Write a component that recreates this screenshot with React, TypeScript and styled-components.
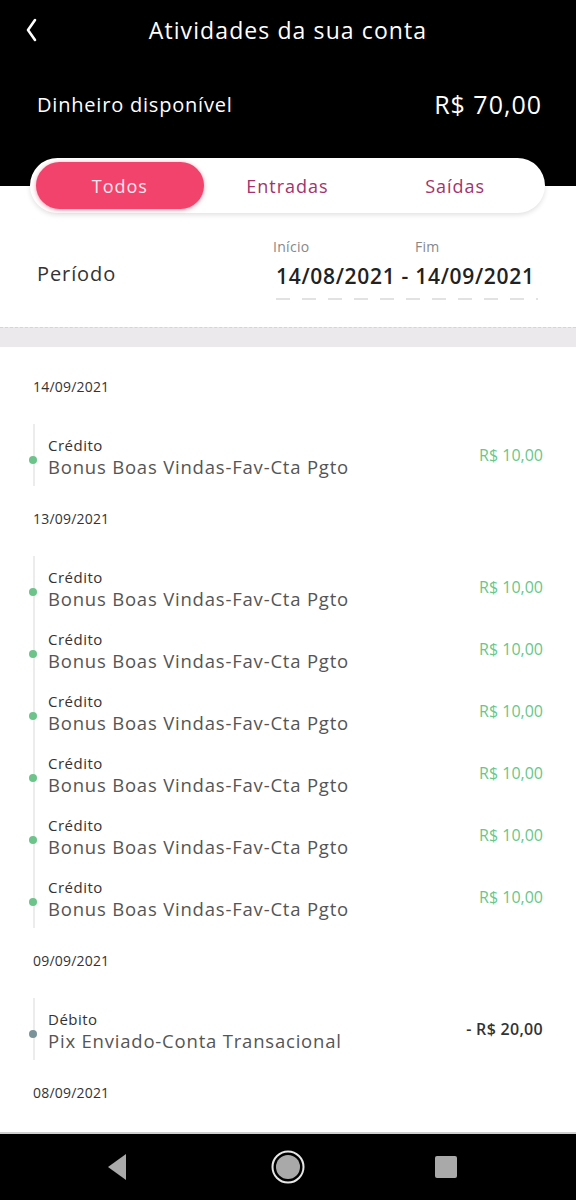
import styled, { createGlobalStyle } from "styled-components";

type Entry = { kind: "Crédito" | "Débito"; desc: string; amount: string };
type Group = { date: string; entries: Entry[] };

const bonus: Entry = { kind: "Crédito", desc: "Bonus Boas Vindas-Fav-Cta Pgto", amount: "R$ 10,00" };

const groups: Group[] = [
  { date: "14/09/2021", entries: [bonus] },
  { date: "13/09/2021", entries: [bonus, bonus, bonus, bonus, bonus, bonus] },
  { date: "09/09/2021", entries: [{ kind: "Débito", desc: "Pix Enviado-Conta Transacional", amount: "- R$ 20,00" }] },
  { date: "08/09/2021", entries: [] },
];

const tabs = ["Todos", "Entradas", "Saídas"];

const App = () => {
  return <Screen>
    <GlobalStyle />
    <Header>
      <TopBar>
        <BackButton aria-label="Voltar">
          <svg width="14" height="24" viewBox="0 0 14 24">
            <polyline points="11,2 4,12 11,22" fill="none" stroke="#fff" strokeWidth="2.6" strokeLinecap="round" strokeLinejoin="round" />
          </svg>
        </BackButton>
        <Title>Atividades da sua conta</Title>
      </TopBar>
      <BalanceRow>
        <BalanceLabel>Dinheiro disponível</BalanceLabel>
        <BalanceValue>R$ 70,00</BalanceValue>
      </BalanceRow>
    </Header>
    <TabsWrap>
      <Tabs>
        {tabs.map((t, i) => <Tab key={t} $active={i === 0}>{t}</Tab>)}
      </Tabs>
    </TabsWrap>
    <PeriodRow>
      <PeriodLabel>Período</PeriodLabel>
      <RangeBox>
        <RangeLabels>
          <RangeLabel>Início</RangeLabel>
          <RangeLabel>Fim</RangeLabel>
        </RangeLabels>
        <RangeValue>14/08/2021 - 14/09/2021</RangeValue>
      </RangeBox>
    </PeriodRow>
    <Divider />
    <List>
      {groups.map((g) => <div key={g.date}>
        <DateLabel>{g.date}</DateLabel>
        {g.entries.map((e, i) => <Item key={i}>
          <ItemText $credit={e.kind === "Crédito"}>
            <Kind>{e.kind}</Kind>
            <Desc>{e.desc}</Desc>
          </ItemText>
          <Amount $credit={e.kind === "Crédito"}>{e.amount}</Amount>
        </Item>)}
      </div>)}
    </List>
    <NavBar>
      <NavIcon $offset={0}>
        <svg width="20" height="28" viewBox="0 0 20 28">
          <polygon points="19,1 19,27 1,14" fill="#a9a9a9" />
        </svg>
      </NavIcon>
      <NavIcon $offset={14}>
        <svg width="36" height="36" viewBox="0 0 36 36">
          <circle cx="18" cy="18" r="15.5" fill="none" stroke="#e6e6e6" strokeWidth="2" />
          <circle cx="18" cy="18" r="12" fill="#a9a9a9" />
        </svg>
      </NavIcon>
      <NavIcon $offset={0}>
        <svg width="22" height="22" viewBox="0 0 22 22">
          <rect x="0" y="0" width="22" height="22" rx="2" fill="#a9a9a9" />
        </svg>
      </NavIcon>
    </NavBar>
  </Screen>
};

const GlobalStyle = createGlobalStyle`
  body {
    margin: 0;
    background: #fff;
    font-family: "Open Sans", "Noto Sans", sans-serif;
  }
`;

const Screen = styled.div`
  width: 576px;
  height: 1200px;
  display: flex;
  flex-direction: column;
  overflow: hidden;
  background: #fff;
`;

const Header = styled.div`
  background: #000;
  color: #fff;
  height: 158px;
  display: flex;
  flex-direction: column;
`;

const TopBar = styled.div`
  height: 60px;
  display: flex;
  align-items: center;
  justify-content: center;
  position: relative;
`;

const BackButton = styled.button`
  position: absolute;
  left: 24px;
  top: 18px;
  background: none;
  border: none;
  padding: 0;
  display: flex;
`;

const Title = styled.div`
  font-size: 23px;
  font-weight: 500;
  letter-spacing: 1.1px;
`;

const BalanceRow = styled.div`
  display: flex;
  align-items: center;
  justify-content: space-between;
  padding: 20px 34px 0 37px;
  height: 48px;
`;

const BalanceLabel = styled.div`
  font-size: 20px;
  letter-spacing: 0.8px;
`;

const BalanceValue = styled.div`
  font-size: 25px;
  font-weight: 500;
  letter-spacing: 1px;
`;

const TabsWrap = styled.div`
  background: linear-gradient(to bottom, #000 50%, #fff 50%);
  padding: 0 31px 0 30px;
`;

const Tabs = styled.div`
  display: grid;
  grid-template-columns: repeat(3, 1fr);
  background: #fff;
  border-radius: 28px;
  padding: 4px 6px;
  height: 47px;
  box-shadow: 0 2px 5px rgba(0, 0, 0, 0.12);
`;

const Tab = styled.div<{ $active: boolean }>`
  display: flex;
  align-items: center;
  justify-content: center;
  border-radius: 24px;
  font-size: 18px;
  font-weight: 500;
  letter-spacing: 1px;
  color: ${(p) => (p.$active ? "#ffe6ee" : "#a2346c")};
  background: ${(p) => (p.$active ? "#f1436c" : "transparent")};
  box-shadow: ${(p) => (p.$active ? "0 1px 4px rgba(200, 30, 70, 0.45)" : "none")};
`;

const PeriodRow = styled.div`
  height: 114px;
  display: flex;
  align-items: flex-start;
  justify-content: space-between;
  padding: 0 38px 0 37px;
`;

const PeriodLabel = styled.div`
  margin-top: 47px;
  font-size: 20px;
  letter-spacing: 0.9px;
  color: #333;
`;

const RangeBox = styled.div`
  margin-top: 24px;
  display: flex;
  flex-direction: column;
  width: 262px;
`;

const RangeLabels = styled.div`
  display: flex;
  margin-left: -3px;
`;

const RangeLabel = styled.span`
  width: 142px;
  flex-shrink: 0;
  font-size: 14px;
  letter-spacing: 0.3px;
  color: #888;
`;

const RangeValue = styled.div`
  margin-top: 6px;
  font-size: 21px;
  font-weight: 600;
  color: #222;
  letter-spacing: 0.7px;
  white-space: nowrap;
  padding-bottom: 10px;
  background-image: linear-gradient(to right, #e2e2e2 55%, transparent 55%);
  background-size: 26px 2px;
  background-repeat: repeat-x;
  background-position: bottom left;
`;

const Divider = styled.div`
  height: 19px;
  background: #ebe9eb;
  border-top: 1px dashed #d6d4d6;
`;

const List = styled.div`
  flex: 1;
  overflow: hidden;
  padding: 7px 33px 0 33px;
`;

const DateLabel = styled.div`
  padding: 23px 0 27px;
  font-size: 14px;
  line-height: 20px;
  letter-spacing: 0.2px;
  color: #333;
`;

const Item = styled.div`
  height: 62px;
  box-sizing: border-box;
  display: flex;
  align-items: center;
  justify-content: space-between;
  border-left: 2px solid #ececec;
  padding: 4px 0 0 13px;
`;

const ItemText = styled.div<{ $credit: boolean }>`
  position: relative;
  display: flex;
  flex-direction: column;
  &::before {
    content: "";
    position: absolute;
    left: -19px;
    top: 21px;
    width: 8px;
    height: 8px;
    border-radius: 50%;
    background: ${(p) => (p.$credit ? "#6cc48a" : "#7a9399")};
  }
`;

const Kind = styled.span`
  font-size: 15px;
  line-height: 20px;
  letter-spacing: 0.5px;
  color: #333;
`;

const Desc = styled.span`
  font-size: 18.5px;
  line-height: 24px;
  letter-spacing: 0.8px;
  color: #555;
`;

const Amount = styled.span<{ $credit: boolean }>`
  font-size: 16px;
  letter-spacing: ${(p) => (p.$credit ? "0" : "0.3px")};
  font-weight: ${(p) => (p.$credit ? 400 : 600)};
  color: ${(p) => (p.$credit ? "#68c789" : "#333")};
  margin-bottom: 4px;
`;

const NavBar = styled.div`
  height: 66px;
  flex-shrink: 0;
  background: #000;
  border-top: 2px solid #cfcfcf;
  display: flex;
  align-items: center;
  justify-content: space-between;
  padding: 0 119px 0 107px;
`;

const NavIcon = styled.span<{ $offset: number }>`
  display: flex;
  margin-left: ${(p) => p.$offset}px;
`;

export default App;
